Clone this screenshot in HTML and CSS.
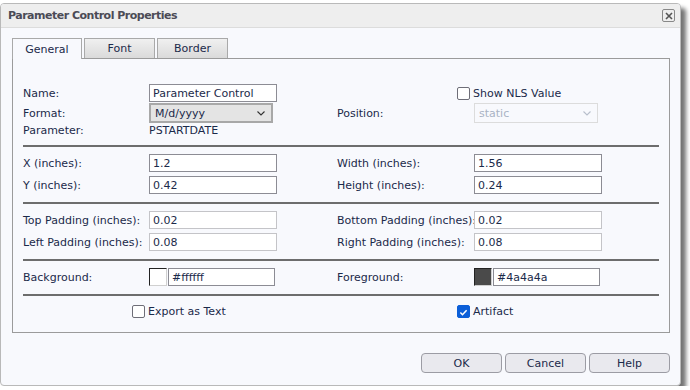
FILE: index.html
```html
<!DOCTYPE html>
<html lang="en">
<head>
    <meta charset="UTF-8">
    <title>Parameter Control Properties</title>
    <link rel="stylesheet" href="styles.css">
</head>
<body>
    <div class="dialog">
        <div class="title-bar">
            <span class="title">Parameter Control Properties</span>
            <span class="close-btn">
                <svg width="10" height="10" viewBox="0 0 10 10"><path d="M2 2 L8 8 M8 2 L2 8" stroke="#555" stroke-width="1.6"/></svg>
            </span>
        </div>

        <div class="dialog-body">
            <!-- Tabs -->
            <div class="tabs">
                <div class="tab active">General</div>
                <div class="tab">Font</div>
                <div class="tab">Border</div>
            </div>

            <div class="panel">
                <div class="grid top-grid">
                    <label>Name:</label>
                    <input class="field" type="text" value="Parameter Control">
                    <span></span>
                    <label class="check nls"><span class="box"></span>Show NLS Value</label>

                    <label>Format:</label>
                    <div class="select">M/d/yyyy
                        <svg class="chev" width="8" height="5" viewBox="0 0 8 5"><path d="M0.5 0.5 L4 4 L7.5 0.5" fill="none" stroke="#333" stroke-width="1.1"/></svg>
                    </div>
                    <span></span>
                    <label>Position:</label>
                    <div class="select disabled">static
                        <svg class="chev" width="8" height="5" viewBox="0 0 8 5"><path d="M0.5 0.5 L4 4 L7.5 0.5" fill="none" stroke="#b8bfcc" stroke-width="1.1"/></svg>
                    </div>

                    <label>Parameter:</label>
                    <span class="value">PSTARTDATE</span>
                </div>

                <hr>

                <div class="grid">
                    <label>X (inches):</label>
                    <input class="field" type="text" value="1.2">
                    <span></span>
                    <label>Width (inches):</label>
                    <input class="field" type="text" value="1.56">

                    <label>Y (inches):</label>
                    <input class="field" type="text" value="0.42">
                    <span></span>
                    <label>Height (inches):</label>
                    <input class="field" type="text" value="0.24">
                </div>

                <hr>

                <div class="grid">
                    <label>Top Padding (inches):</label>
                    <input class="field light" type="text" value="0.02">
                    <span></span>
                    <label>Bottom Padding (inches):</label>
                    <input class="field light" type="text" value="0.02">

                    <label>Left Padding (inches):</label>
                    <input class="field light" type="text" value="0.08">
                    <span></span>
                    <label>Right Padding (inches):</label>
                    <input class="field light" type="text" value="0.08">
                </div>

                <hr>

                <div class="grid">
                    <label>Background:</label>
                    <div class="color-field">
                        <span class="swatch"></span>
                        <input class="field" type="text" value="#ffffff">
                    </div>
                    <span></span>
                    <label>Foreground:</label>
                    <div class="color-field">
                        <span class="swatch dark"></span>
                        <input class="field" type="text" value="#4a4a4a">
                    </div>
                </div>

                <hr>

                <div class="checks">
                    <label class="check export"><span class="box"></span>Export as Text</label>
                    <label class="check artifact">
                        <span class="box checked">
                            <svg width="13" height="13" viewBox="0 0 13 13"><path d="M2.8 6.6 L5.3 9.1 L10.2 3.9" fill="none" stroke="#fff" stroke-width="1.8"/></svg>
                        </span>Artifact
                    </label>
                </div>
            </div>

            <div class="buttons">
                <button>OK</button>
                <button>Cancel</button>
                <button>Help</button>
            </div>
        </div>
    </div>
</body>
</html>
```

FILE: styles.css
```css
* {
    margin: 0;
    padding: 0;
    box-sizing: border-box;
}

body {
    background: #ffffff;
    font-family: 'DejaVu Sans', Verdana, sans-serif;
    font-size: 11px;
    color: #1b2a4a;
}

/* Dialog frame */
.dialog {
    width: 681px;
    height: 383px;
    margin-top: 3px;
    background: #f8f9fd;
    border: 1px solid #b9b9b9;
    border-radius: 4px;
    box-shadow: 5px 5px 4px rgba(0, 0, 0, 0.55);
    overflow: hidden;
}

.title-bar {
    height: 24px;
    background: #eeeeee;
    border-bottom: 1px solid #dcdcdc;
    display: flex;
    align-items: center;
    justify-content: space-between;
    padding: 0 5px 0 7px;
}

.title {
    font-weight: bold;
    font-size: 11px;
    letter-spacing: -0.5px;
    color: #4b4b56;
}

.close-btn {
    width: 13px;
    height: 13px;
    border: 1px solid #888;
    border-radius: 2px;
    display: flex;
    align-items: center;
    justify-content: center;
}

.dialog-body {
    padding: 10px 10px 0 11px;
}

/* Tabs */
.tabs {
    display: flex;
    gap: 2px;
    height: 20px;
    position: relative;
    z-index: 1;
}

.tab {
    width: 71px;
    height: 20px;
    border: 1px solid #a9a9a9;
    border-bottom: none;
    background: linear-gradient(#f0f0f0, #dadada);
    text-align: center;
    line-height: 19px;
    color: #1b2a4a;
}

.tab.active {
    width: 70px;
    height: 21px;
    background: #f8f9fd;
    padding-top: 1px;
}

.panel {
    height: 275px;
    border: 1px solid #9b9b9b;
    padding: 25px 10px 0 10px;
}

/* Form grids */
.grid {
    display: grid;
    grid-template-columns: 126px 128px 60px 137px 128px;
    row-gap: 4px;
    align-items: center;
}

.top-grid {
    row-gap: 1px;
}

.nls {
    grid-column: 4 / 6;
    padding-left: 120px;
}

label {
    white-space: nowrap;
}

.field {
    width: 128px;
    height: 18px;
    border: 1px solid #8c8c94;
    background: #fff;
    font: inherit;
    color: #1b2a4a;
    padding: 0 3px;
    outline: none;
}

.field.light {
    border-color: #c4c4c8;
}

.select {
    width: 124px;
    height: 20px;
    border: 2px solid #a8a8a8;
    background: #e4e4e4;
    padding: 0 6px 0 4px;
    display: flex;
    align-items: center;
    justify-content: space-between;
}

.select.disabled {
    border: 1px solid #dcdcdc;
    background: #f8f9fd;
    color: #a9b3c4;
}

.value {
    line-height: 12px;
}

hr {
    border: none;
    border-top: 2px solid #6d6d6d;
    margin: 8px 0 7px 0;
}

/* Color pickers */
.color-field {
    display: flex;
    gap: 1px;
}

.swatch {
    width: 18px;
    height: 18px;
    border: 1px solid #d0d0d0;
    border-top-color: #222;
    border-left-color: #222;
    background: #fff;
}

.swatch.dark {
    background: #4a4a4a;
}

.color-field .field {
    width: 107px;
}

/* Checkboxes */
.check {
    display: flex;
    align-items: center;
    gap: 3px;
}

.box {
    width: 13px;
    height: 13px;
    border: 1px solid #6e6e78;
    border-radius: 2px;
    background: #fff;
    display: inline-flex;
}

.box.checked {
    background: #0c5fd8;
    border-color: #0c5fd8;
}

.checks {
    display: flex;
    padding: 2px 0 0 109px;
}

.checks .export {
    width: 325px;
}

/* Buttons */
.buttons {
    display: flex;
    justify-content: flex-end;
    gap: 3px;
    padding-top: 20px;
}

button {
    width: 81px;
    height: 20px;
    border: 1px solid #9c9ca4;
    border-radius: 4px;
    background: #e9e9ee;
    font: inherit;
    color: #1b2a4a;
}
```
